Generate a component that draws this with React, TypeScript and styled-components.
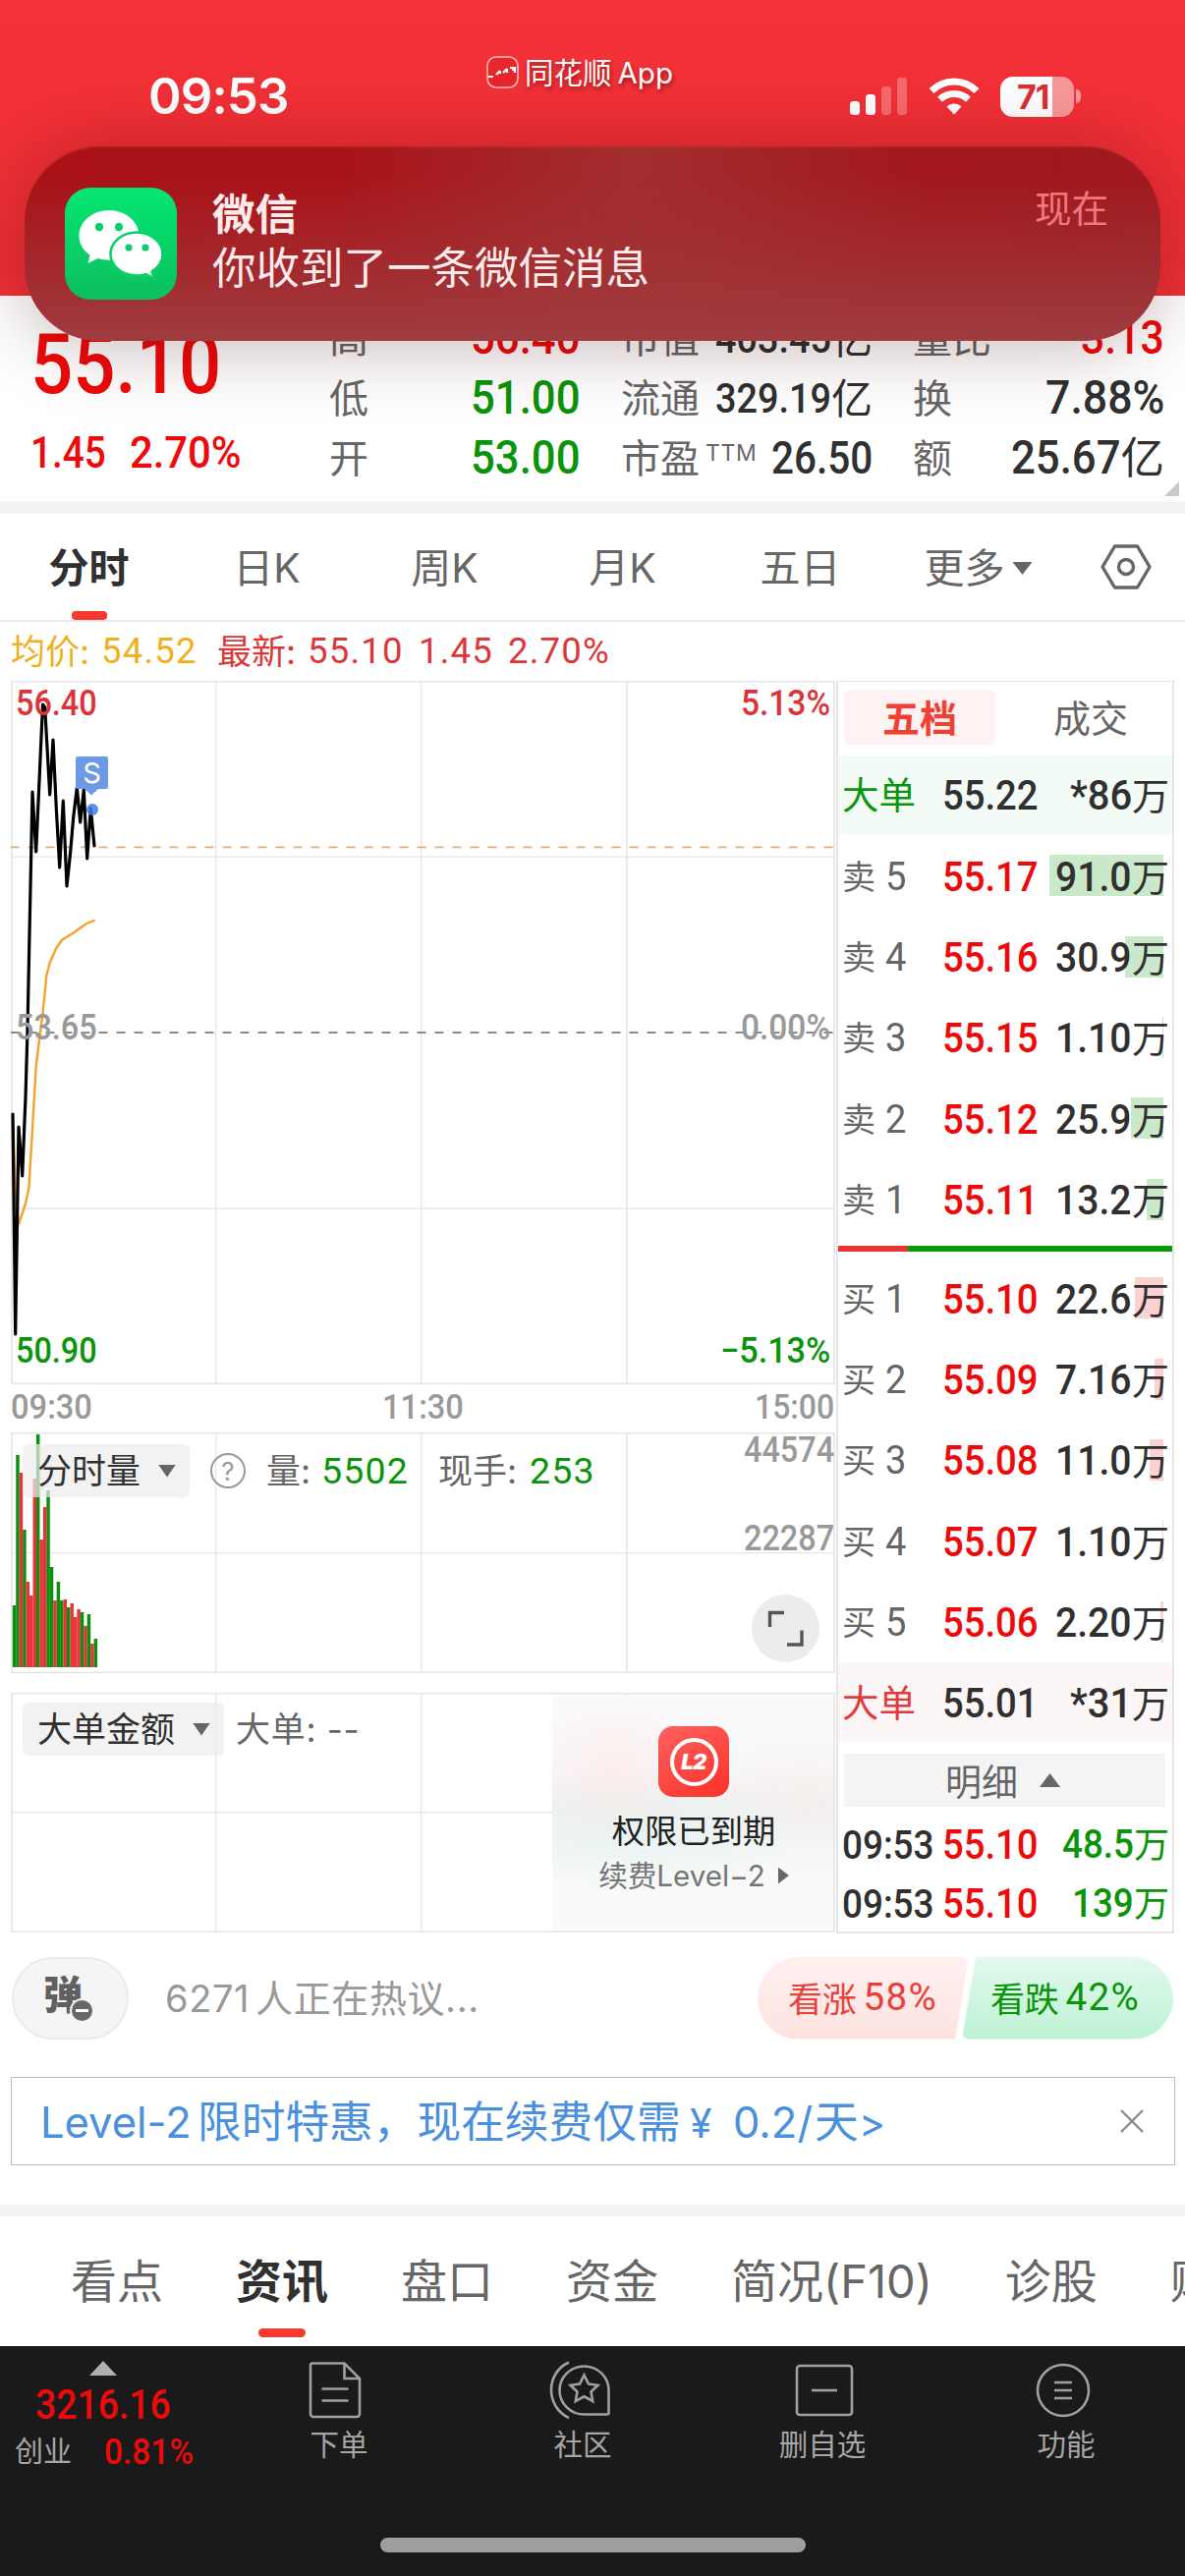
import React from "react";
import styled, { createGlobalStyle, css } from "styled-components";

const RED = "#ee0a0a";
const GREEN = "#0a940a";
const INK = "#303030";
const GRAY = "#666666";
const MUTED = "#999999";
const LINE = "#e6e6e6";

const GlobalStyle = createGlobalStyle`
  * { box-sizing: border-box; }
  html, body { margin: 0; padding: 0; background: #fff; }
  body { font-family: Inter, "Noto Sans CJK SC", sans-serif; color: ${INK}; }
`;

const Page = styled.div`
  position: relative;
  display: flex;
  flex-direction: column;
  width: 1206px;
  height: 2622px;
  overflow: hidden;
  background: #fff;
  white-space: nowrap;
`;

/* ---------- condensed numerals ---------- */

const SQUEEZE = 0.9;
const GLYPH_EM: Record<string, number> = { ".": 0.275, ":": 0.255, "%": 0.737, "−": 0.56, "*": 0.44, " ": 0.25 };
const emWidth = (s: string) => [...s].reduce((w, c) => w + (GLYPH_EM[c] ?? 0.5645), 0);

const Figure = styled.span<{ $size: number; $em: number; $color?: string; $weight?: number; $squeeze: number }>`
  display: inline-block;
  flex: none;
  font-family: Roboto, "Noto Sans CJK SC", sans-serif;
  font-size: ${(p) => p.$size}px;
  font-weight: ${(p) => p.$weight ?? 500};
  color: ${(p) => p.$color ?? "inherit"};
  transform: scaleX(${(p) => p.$squeeze});
  transform-origin: left center;
  margin-right: ${(p) => -(1 - p.$squeeze) * p.$em}em;
`;

type NumProps = { v: string; size: number; color?: string; weight?: number; squeeze?: number };
const Num = ({ v, size, color, weight, squeeze = SQUEEZE }: NumProps) => (
  <Figure $size={size} $em={emWidth(v)} $color={color} $weight={weight} $squeeze={squeeze}>
    {v}
  </Figure>
);

const Label = styled.span<{ $size: number; $color?: string; $bold?: boolean }>`
  flex: none;
  font-family: Inter, "Noto Sans CJK SC", sans-serif;
  font-size: ${(p) => p.$size}px;
  color: ${(p) => p.$color ?? GRAY};
  font-weight: ${(p) => (p.$bold ? 700 : 400)};
`;

/* ---------- status bar ---------- */

const Header = styled.header`
  flex: none;
  height: 301px;
  background: linear-gradient(#f43138 0%, #f23037 40%, #ef3037 100%);
`;

const StatusBar = styled.div`
  display: flex;
  height: 140px;
  color: #fff;
`;

const Clock = styled.div`
  width: 342px;
  padding: 67px 0 0 151px;
  font-size: 51px;
  line-height: 62px;
  font-weight: 600;
  letter-spacing: -0.9px;
`;

const AppMark = styled.div`
  display: flex;
  align-items: center;
  width: 523px;
  height: 36px;
  margin-top: 55px;
  padding-left: 153px;
  font-size: 29.5px;
  line-height: 32px;
  text-shadow: 1px 3px 4px rgba(90, 0, 0, 0.55);
`;

const AppName = styled.span`
  display: flex;
  align-items: baseline;
  gap: 6px;
  margin: 2px 0 0 6px;
`;

const Indicators = styled.div`
  display: flex;
  align-items: center;
  height: 44px;
  margin-top: 76px;
`;

const Bars = styled.svg`
  width: 59px;
  height: 38px;
  margin-right: 21px;
`;

const Wifi = styled.svg`
  width: 52px;
  height: 38px;
  margin-right: 21px;
`;

const Battery = styled.div`
  width: 75px;
  height: 41px;
  border-radius: 13px;
  background: linear-gradient(90deg, #fff 0 53px, rgba(255, 255, 255, 0.5) 53px);
  color: #d93036;
  font-size: 34px;
  font-weight: 700;
  line-height: 41px;
  padding-left: 17px;
  letter-spacing: -1px;
`;

const BatteryTip = styled.div`
  width: 5px;
  height: 14px;
  margin-left: 2px;
  border-radius: 0 5px 5px 0;
  background: rgba(255, 255, 255, 0.5);
`;

/* ---------- notification ---------- */

const Notification = styled.div`
  position: absolute;
  z-index: 5;
  left: 25px;
  top: 149px;
  width: 1156px;
  height: 198px;
  display: flex;
  padding: 0 53px 0 41px;
  border-radius: 76px;
  background:
    radial-gradient(ellipse 300px 260px at 54% 10%, rgba(160, 62, 62, 0.6), rgba(160, 62, 62, 0) 100%),
    linear-gradient(180deg, rgba(158, 62, 66, 0) 15%, rgba(158, 62, 66, 0.95) 100%),
    linear-gradient(90deg, #a91117 0%, #a81419 35%, #9f191e 100%);
  box-shadow: 0 4px 80px rgba(60, 0, 0, 0.3), inset 0 2px 1px rgba(200, 60, 60, 0.25);
`;

const WeChatTile = styled.svg`
  flex: none;
  width: 114px;
  height: 114px;
  margin-top: 42px;
`;

const NoticeBody = styled.div`
  flex: 1;
  margin: 42px 0 0 36px;
  color: #fdeaea;
`;

const NoticeTitle = styled.div`
  font-size: 43.5px;
  line-height: 55px;
  font-weight: 700;
`;

const NoticeText = styled.div`
  font-size: 44.5px;
  line-height: 54px;
`;

const NoticeTime = styled.div`
  margin-top: 41px;
  font-size: 37.5px;
  line-height: 46px;
  color: #f3777c;
`;

/* ---------- quote block ---------- */

const Quote = styled.section`
  position: relative;
  flex: none;
  height: 210px;
  padding: 13px 21px 0 31px;
  display: grid;
  grid-template-columns: 263px 256px 256px 256px;
  column-gap: 41px;
  background: #fff;
  border-bottom: 6px solid #fcfcfc;
`;

const QuoteMain = styled.div`
  display: flex;
  flex-direction: column;
`;

const BigPrice = styled.div`
  margin-top: 20px;
  height: 74px;
  line-height: 74px;
  color: ${RED};
`;

const Change = styled.div`
  display: flex;
  gap: 24px;
  margin-top: 28px;
  line-height: 52px;
  color: ${RED};
`;

const Stats = styled.div`
  display: flex;
  flex-direction: column;
`;

const Stat = styled.div`
  display: flex;
  justify-content: space-between;
  height: 61px;
  line-height: 61px;
`;

const StatValue = styled.span<{ $color?: string }>`
  display: flex;
  color: ${(p) => p.$color ?? INK};
`;

const Ttm = styled.sup`
  align-self: flex-start;
  margin: 0 auto 0 6px;
  font-size: 23px;
  line-height: 50px;
  color: ${GRAY};
  letter-spacing: 0.6px;
`;

const Corner = styled.div`
  position: absolute;
  right: 6px;
  bottom: 0;
  border-left: 15px solid transparent;
  border-bottom: 15px solid #c9c9c9;
`;

const Band = styled.div<{ $mt?: number }>`
  flex: none;
  height: 12px;
  margin-top: ${(p) => p.$mt ?? 0}px;
  background: #f3f3f3;
`;

/* ---------- period tabs ---------- */

const PeriodTabs = styled.nav`
  flex: none;
  display: flex;
  height: 110px;
  border-bottom: 2px solid #ebebeb;
`;

const Period = styled.div<{ $on?: boolean }>`
  display: flex;
  align-items: center;
  justify-content: center;
  flex-wrap: wrap;
  width: 181px;
  height: 108px;
  padding-top: 3px;
  font-size: 41px;
  line-height: 105px;
  color: ${(p) => (p.$on ? INK : GRAY)};
  ${(p) =>
    p.$on &&
    css`
      font-weight: 700;
      &::after {
        content: "";
        width: 36px;
        height: 9px;
        margin: -9px 60px 0;
        border-radius: 4px;
        background: #f8392f;
      }
    `}
`;

const Settings = styled.div`
  flex: 1;
  display: flex;
  align-items: center;
  justify-content: center;
`;

const Caret = styled.i<{ $w: number; $h: number; $up?: boolean; $color?: string; $gap?: number }>`
  flex: none;
  display: inline-block;
  width: ${(p) => p.$w}px;
  height: ${(p) => p.$h}px;
  margin-left: ${(p) => p.$gap ?? 0}px;
  background: ${(p) => p.$color ?? GRAY};
  clip-path: ${(p) => (p.$up ? "polygon(50% 0, 100% 100%, 0 100%)" : "polygon(0 0, 100% 0, 50% 100%)")};
`;

const PriceLine = styled.div`
  flex: none;
  display: flex;
  align-items: center;
  height: 60px;
  line-height: 60px;
  padding-left: 11px;
`;

const Reading = styled.span<{ $w: number; $color: string }>`
  width: ${(p) => p.$w}px;
  font-family: Inter, "Noto Sans CJK SC", sans-serif;
  font-size: 35px;
  color: ${(p) => p.$color};
`;

const ReadingValue = styled.span<{ $w?: number; $color: string; $size?: number }>`
  width: ${(p) => (p.$w ? `${p.$w}px` : "auto")};
  font-family: Roboto, sans-serif;
  font-size: ${(p) => p.$size ?? 36.5}px;
  letter-spacing: 1.2px;
  color: ${(p) => p.$color};
`;

/* ---------- charts ---------- */

const Board = styled.main`
  flex: none;
  display: flex;
  height: 1275px;
  padding-left: 11px;
`;

const Charts = styled.div`
  width: 839px;
  display: flex;
  flex-direction: column;
`;

const Pane = styled.div<{ $h: number; $mt?: number }>`
  position: relative;
  flex: none;
  height: ${(p) => p.$h}px;
  margin-top: ${(p) => p.$mt ?? 0}px;
`;

const Plot = styled.svg`
  position: absolute;
  inset: 0;
  display: block;
`;

const Scale = styled.div`
  position: relative;
  height: 100%;
  display: flex;
  flex-direction: column;
  justify-content: space-between;
  padding: 3px 5px 14px 5px;
`;

const ScaleRow = styled.div<{ $color: string }>`
  display: flex;
  justify-content: space-between;
  height: 40px;
  line-height: 40px;
  color: ${(p) => p.$color};
`;

const TimeAxis = styled.div`
  flex: none;
  display: flex;
  justify-content: space-between;
  height: 49px;
  line-height: 46px;
  padding: 0 1px 0 0;
  color: ${MUTED};
`;

const PaneHead = styled.div<{ $top?: number }>`
  position: relative;
  display: flex;
  align-items: center;
  padding-left: 12px;
  height: 54px;
  top: ${(p) => p.$top ?? 12}px;
  ${Reading} {
    padding-bottom: 5px;
  }
`;

const Chip = styled.div<{ $w: number }>`
  display: flex;
  align-items: center;
  width: ${(p) => p.$w}px;
  height: 54px;
  padding-left: 15px;
  border-radius: 6px;
  background: rgba(236, 236, 236, 0.7);
`;

const ChipText = styled.span`
  font-size: 35px;
  padding-bottom: 5px;
  color: ${INK};
`;

const BigOrder = styled.span`
  padding: 0 0 5px 12px;
  font-size: 35px;
  letter-spacing: 0.7px;
  color: ${GRAY};
`;

const HelpMark = styled.span`
  display: flex;
  align-items: center;
  justify-content: center;
  width: 36px;
  height: 36px;
  margin: 0 21px 0 21px;
  border: 2.5px solid ${MUTED};
  border-radius: 50%;
  font-size: 26px;
  color: ${MUTED};
`;

const VolumeScale = styled.div`
  position: absolute;
  top: -2px;
  right: 1px;
  display: flex;
  flex-direction: column;
  gap: 50px;
  line-height: 40px;
  color: ${MUTED};
`;

const ExpandButton = styled.div`
  position: absolute;
  right: 16px;
  bottom: 11px;
  width: 69px;
  height: 69px;
  border-radius: 50%;
  background: #ececec;
`;

const Promo = styled.div`
  position: absolute;
  top: 3px;
  right: 2px;
  width: 286px;
  height: 239px;
  display: flex;
  flex-direction: column;
  align-items: center;
  padding: 31px 0 0 2px;
  background:
    radial-gradient(ellipse 90px 80px at 22% 32%, rgba(255, 225, 225, 0.45), rgba(255, 225, 225, 0)),
    radial-gradient(ellipse 110px 50px at 90% 40%, rgba(250, 232, 230, 0.4), rgba(250, 232, 230, 0)),
    radial-gradient(ellipse 170px 60px at 30% 58%, rgba(228, 244, 240, 0.8), rgba(228, 244, 240, 0)),
    linear-gradient(#fafafa 0%, #f8f8f8 30%, #f0f0f0 48%, #f6f7f7 68%, #fafafa 85%);
`;

const LevelTile = styled.div`
  display: flex;
  align-items: center;
  justify-content: center;
  width: 72px;
  height: 72px;
  border-radius: 15px;
  background: linear-gradient(150deg, #ff6060, #fb3229);
`;

const LevelRing = styled.div`
  display: flex;
  align-items: center;
  justify-content: center;
  width: 49px;
  height: 49px;
  border: 4px solid #fff;
  border-radius: 50%;
  color: #fff;
  font: italic 900 22px/1 Inter, sans-serif;
  letter-spacing: -0.5px;
`;

const PromoTitle = styled.div`
  margin-top: 12px;
  font-size: 33.3px;
  line-height: 46px;
  color: #222;
`;

const PromoLink = styled.div`
  display: flex;
  align-items: center;
  font-size: 29.6px;
  line-height: 44px;
  color: #757575;
`;

const RightArrow = styled.i`
  width: 11px;
  height: 17px;
  margin-left: 13px;
  background: ${GRAY};
  clip-path: polygon(0 0, 100% 50%, 0 100%);
`;

/* ---------- order book ---------- */

const Book = styled.aside`
  width: 344px;
  margin-left: 1px;
  display: flex;
  flex-direction: column;
  border: 2px solid ${LINE};
  border-top-width: 1px;
`;

const BookTabs = styled.div`
  display: flex;
  height: 75px;
  padding: 8px 6px;
`;

const BookTab = styled.div<{ $on?: boolean }>`
  flex: none;
  display: flex;
  align-items: center;
  justify-content: center;
  width: 154px;
  height: 57px;
  padding-bottom: 5px;
  margin-right: 20px;
  border-radius: 6px;
  font-size: 38px;
  color: ${(p) => (p.$on ? "#f23f34" : GRAY)};
  font-weight: ${(p) => (p.$on ? 700 : 400)};
  background: ${(p) => (p.$on ? "#fff2f2" : "transparent")};
`;

const BookRow = styled.div<{ $h: number; $bg?: string; $drop?: number }>`
  display: grid;
  grid-template-columns: 102px 96px 1fr;
  align-items: center;
  height: ${(p) => p.$h}px;
  line-height: 60px;
  padding: ${(p) => p.$drop ?? 0}px 3px 0 4px;
  background: ${(p) => p.$bg ?? "transparent"};
`;

const Level = styled.span`
  display: flex;
  align-items: center;
  gap: 10px;
`;

const Amount = styled.span<{ $depth?: number; $tint?: string; $color?: string }>`
  display: flex;
  justify-content: flex-end;
  align-items: center;
  height: 48px;
  line-height: 48px;
  color: ${(p) => p.$color ?? INK};
  background: ${(p) =>
    p.$depth ? `linear-gradient(${p.$tint}, ${p.$tint}) right 6.5px top 1.5px / ${p.$depth}px 42px no-repeat` : "none"};
`;

const Ratio = styled.div`
  height: 6px;
  margin: 6px 0 6px;
  background: linear-gradient(90deg, #e93436 0 71px, #0a9a0a 71px);
`;

const DetailBar = styled.div`
  display: flex;
  align-items: center;
  justify-content: center;
  height: 54px;
  margin: 12px 7px 7px 6px;
  padding-right: 4px;
  background: #f4f4f4;
`;

/* ---------- discussion ---------- */

const Talk = styled.section`
  flex: none;
  display: flex;
  align-items: center;
  height: 131px;
  padding: 0 12px;
`;

const DanmuButton = styled.div`
  position: relative;
  width: 119px;
  height: 84px;
  padding-left: 30px;
  border: 2px solid #ebebeb;
  border-radius: 42px;
  background: #f5f5f5;
  font-size: 40px;
  line-height: 73px;
  font-weight: 900;
  color: #606060;
`;

const DanmuOff = styled.i`
  position: absolute;
  left: 57px;
  top: 40px;
  display: flex;
  align-items: center;
  justify-content: center;
  width: 25px;
  height: 25px;
  border: 2px solid #f5f5f5;
  border-radius: 50%;
  background: #686868;
  &::after {
    content: "";
    width: 13px;
    height: 3px;
    background: #fff;
  }
`;

const TalkHint = styled.div`
  flex: 1;
  padding: 0 0 5px 37px;
  font-size: 38px;
  letter-spacing: 0.6px;
  color: ${MUTED};
`;

const HintCount = styled.span`
  margin-right: 6px;
`;

const Vote = styled.div<{ $bull?: boolean }>`
  display: flex;
  align-items: center;
  gap: 7px;
  height: 84px;
  width: 215px;
  padding: 0 0 3px ${(p) => (p.$bull ? 31 : 29)}px;
  font-size: 35px;
  letter-spacing: -0.2px;
  color: ${(p) => (p.$bull ? "#e8403a" : GREEN)};
  background: ${(p) => (p.$bull ? "linear-gradient(#fff1f0, #fde2df)" : "linear-gradient(#e3f9ee, #bdf2d3)")};
  border-radius: ${(p) => (p.$bull ? "42px 8px 8px 42px" : "8px 42px 42px 8px")};
  clip-path: ${(p) =>
    p.$bull ? "polygon(0 0, 100% 0, 201px 100%, 0 100%)" : "polygon(14px 0, 100% 0, 100% 100%, 0 100%)"};
  & + & {
    margin-left: -7px;
  }
`;

const VoteValue = styled.span`
  font-family: Roboto, sans-serif;
  font-size: 38.5px;
  letter-spacing: 1.3px;
  padding-top: 1px;
`;

const Banner = styled.section`
  flex: none;
  display: flex;
  align-items: center;
  height: 90px;
  margin: 15px 10px 0 11px;
  padding: 0 31px 0 29px;
  border: 1px solid #b9bcc0;
  color: #4a90dc;
`;

const BannerText = styled.div`
  flex: 1;
  display: flex;
  align-items: baseline;
  margin-top: -5px;
`;

const Piece = styled.span<{ $w?: number; $size?: number; $ls?: number }>`
  width: ${(p) => (p.$w ? `${p.$w}px` : "auto")};
  font-size: ${(p) => p.$size ?? 44.7}px;
  letter-spacing: ${(p) => p.$ls ?? 0}px;
`;

/* ---------- section tabs and bottom bar ---------- */

const SectionTabs = styled.nav`
  flex: none;
  display: flex;
  gap: 74px;
  height: 132px;
  padding-left: 72px;
  overflow: hidden;
`;

const SectionTab = styled.div<{ $on?: boolean }>`
  flex: none;
  display: flex;
  flex-direction: column;
  align-items: center;
  font-size: 47px;
  line-height: 114px;
  padding-top: 9px;
  height: 132px;
  color: ${(p) => (p.$on ? INK : GRAY)};
  ${(p) =>
    p.$on &&
    css`
      font-weight: 700;
      &::after {
        content: "";
        flex: none;
        width: 48px;
        height: 9px;
        margin-top: -9px;
        border-radius: 5px;
        background: #f8392f;
      }
    `}
`;

const BottomBar = styled.footer`
  position: relative;
  flex: none;
  height: 234px;
  display: flex;
  background: #1a1a1a;
`;

const IndexCell = styled.div`
  flex: none;
  width: 221px;
  padding-top: 15px;
`;

const IndexCaret = styled.div`
  display: flex;
  padding-left: 91px;
`;

const IndexValue = styled.div`
  padding-left: 36px;
  line-height: 50px;
  margin-top: 5px;
  color: ${RED};
`;

const IndexChange = styled.div`
  display: flex;
  justify-content: space-between;
  margin-top: -7px;
  padding: 0 24px 0 15px;
  line-height: 44px;
`;

const NavItem = styled.div<{ $w: number }>`
  flex: none;
  display: flex;
  flex-direction: column;
  align-items: center;
  width: ${(p) => p.$w}px;
  padding-top: 13px;
  color: #a6a6a6;
  font-size: 29.5px;
  line-height: 44px;
`;

const NavIcon = styled.svg<{ $pull: number }>`
  width: 64px;
  height: 62px;
  margin: 0 ${(p) => p.$pull}px 3px 0;
  fill: none;
  stroke: #a0a0a0;
  stroke-width: 2.6;
`;

const HomeBar = styled.div`
  position: absolute;
  left: 387px;
  top: 195px;
  width: 433px;
  height: 15px;
  border-radius: 8px;
  background: #9e9e9e;
`;

/* ---------- data ---------- */

const PRICE =
  "13,1134 15.7,1358 19,1147 22.7,1197 26,1117 28,1048 33,806 36.7,867 43.5,717 45.7,720 50.7,809 54,753 57.3,823 60.7,883 64.3,815 68,902 71.5,869 74.7,832 78.3,802 81.7,837 85.3,804 88.7,874 92.3,823 96,861";
const AVERAGE =
  "13.5,1145 16,1220 19,1246 26,1225 29.5,1208 32.7,1154 36.7,1085 40.7,1053 43.7,1030 47.3,993 50.7,980 57.3,965 63.3,956.5 74,950 81,945 88,940 96.7,936.6";

const VOLUME: [string, number][] = [
  ["g", 63], ["g", 216], ["r", 198], ["g", 140], ["r", 87], ["r", 73], ["r", 192], ["g", 237], ["r", 130],
  ["r", 163], ["g", 180], ["g", 102], ["r", 68], ["g", 87], ["g", 68], ["r", 69], ["g", 61], ["r", 65],
  ["r", 51], ["r", 59], ["g", 56], ["r", 42], ["g", 54], ["r", 24], ["g", 29],
];

const SELL: [string, string, string, number][] = [
  ["5", "55.17", "91.0", 116],
  ["4", "55.16", "30.9", 39],
  ["3", "55.15", "1.10", 1],
  ["2", "55.12", "25.9", 33],
  ["1", "55.11", "13.2", 17],
];
const BUY: [string, string, string, number][] = [
  ["1", "55.10", "22.6", 29],
  ["2", "55.09", "7.16", 9],
  ["3", "55.08", "11.0", 14],
  ["4", "55.07", "1.10", 1],
  ["5", "55.06", "2.20", 3],
];

const GridLines = ({ top, bottom, rows }: { top: number; bottom: number; rows: number[] }) => (
  <g fill={LINE}>
    <rect x="11" y={top} width="839" height="1.5" />
    <rect x="11" y={bottom - 1.5} width="839" height="1.5" />
    {rows.map((y) => (
      <rect key={y} x="11" y={y} width="839" height="1.3" />
    ))}
    <rect x="11" y={top} width="1.7" height={bottom - top} />
    <rect x="219" y={top} width="1.3" height={bottom - top} />
    <rect x="428" y={top} width="1.3" height={bottom - top} />
    <rect x="637" y={top} width="1.7" height={bottom - top} />
    <rect x="848.3" y={top} width="1.7" height={bottom - top} />
  </g>
);

const Depth = ({ side, tint, rows }: { side: string; tint: string; rows: typeof SELL }) => (
  <>
    {rows.map(([n, price, vol, depth]) => (
      <BookRow key={n} $h={82.4} $drop={3}>
        <Level>
          <Label $size={34}>{side}</Label>
          <Num v={n} size={40} weight={400} color={GRAY} squeeze={0.95} />
        </Level>
        <Num v={price} size={42.5} color={RED} />
        <Amount $depth={depth} $tint={tint}>
          <Num v={vol} size={42.5} squeeze={0.92} />
          <Label $size={38} $color={INK}>万</Label>
        </Amount>
      </BookRow>
    ))}
  </>
);

export default function App() {
  return (
    <Page>
      <GlobalStyle />
      <Header>
        <StatusBar>
          <Clock>09:53</Clock>
          <AppMark>
            <svg width="33" height="33" viewBox="0 0 33 33">
              <rect x="1" y="1" width="31" height="31" rx="9" fill="#e8262c" stroke="#fbb" strokeWidth="1.6" />
              <path d="M2 21h5M10 19l4-4M14 15v3M17 17l4-4M21 13v4M24 12h5v5M26 14h3" stroke="#fff" strokeWidth="2.2" fill="none" />
            </svg>
            <AppName>同花顺<span>App</span></AppName>
          </AppMark>
          <Indicators>
            <Bars viewBox="0 0 59 38" fill="#fff">
              <rect x="0" y="24" width="10" height="14" rx="3.5" />
              <rect x="16" y="17" width="10" height="21" rx="3.5" />
              <rect x="32" y="9" width="10" height="29" rx="3.5" opacity="0.28" />
              <rect x="48" y="0" width="10" height="38" rx="3.5" opacity="0.28" />
            </Bars>
            <Wifi viewBox="0 0 52 38" fill="none" stroke="#fff" strokeWidth="7">
              <path d="M3 13.5C16 .8 36 .8 49 13.5" />
              <path d="M11.500 22.200c8-7.600 21-7.600 29 0" />
              <path d="M26 37.500l-7.500-8c4.500-4 10.500-4 15 0z" fill="#fff" stroke="none" />
            </Wifi>
            <Battery>71</Battery>
            <BatteryTip />
          </Indicators>
        </StatusBar>
      </Header>

      <Notification>
        <WeChatTile viewBox="0 0 114 114">
          <defs>
            <linearGradient id="wx" x1="0" y1="0" x2="0" y2="1">
              <stop offset="0" stopColor="#04e672" />
              <stop offset="1" stopColor="#0cbf5e" />
            </linearGradient>
          </defs>
          <rect width="114" height="114" rx="26" fill="url(#wx)" />
          <path d="M45 23C28 23 14.500 34.500 14.500 49c0 8 4.200 15 11 19.800L23.500 77l9.800-5c3.700 1.100 7.600 1.700 11.700 1.700 17 0 30.500-10.700 30.500-24.700S62 23 45 23z" fill="#fff" />
          <path d="M73 45.500c-14.600 0-26.500 9.800-26.500 22S58.400 89.500 73 89.500c3.200 0 6.300-.5 9.200-1.300l8.500 4.300-2-7.300c6.700-4.100 10.800-10.500 10.800-17.700 0-12.200-11.900-22-26.500-22z" fill="#fff" stroke="#08d368" strokeWidth="2.600" />
          <g fill="#08d067">
            <circle cx="35" cy="40" r="4.200" />
            <circle cx="55" cy="40" r="4.200" />
            <circle cx="65" cy="61" r="3.600" />
            <circle cx="82" cy="61" r="3.600" />
          </g>
        </WeChatTile>
        <NoticeBody>
          <NoticeTitle>微信</NoticeTitle>
          <NoticeText>你收到了一条微信消息</NoticeText>
        </NoticeBody>
        <NoticeTime>现在</NoticeTime>
      </Notification>

      <Quote>
        <QuoteMain>
          <BigPrice>
            <Num v="55.10" size={86} squeeze={0.885} />
          </BigPrice>
          <Change>
            <Num v="1.45" size={43.5} squeeze={0.89} />
            <Num v="2.70%" size={43.5} squeeze={0.96} />
          </Change>
        </QuoteMain>
        <Stats>
          <Stat>
            <Label $size={40}>高</Label>
            <StatValue $color={RED}><Num v="56.40" size={47.5} squeeze={0.92} /></StatValue>
          </Stat>
          <Stat>
            <Label $size={40}>低</Label>
            <StatValue $color={GREEN}><Num v="51.00" size={47.5} squeeze={0.92} /></StatValue>
          </Stat>
          <Stat>
            <Label $size={40}>开</Label>
            <StatValue $color={GREEN}><Num v="53.00" size={47.5} squeeze={0.92} /></StatValue>
          </Stat>
        </Stats>
        <Stats>
          <Stat>
            <Label $size={40}>市值</Label>
            <StatValue><Num v="403.45" size={43} squeeze={0.88} /><Label $size={42} $color={INK}>亿</Label></StatValue>
          </Stat>
          <Stat>
            <Label $size={40}>流通</Label>
            <StatValue><Num v="329.19" size={43} squeeze={0.88} /><Label $size={42} $color={INK}>亿</Label></StatValue>
          </Stat>
          <Stat>
            <Label $size={40}>市盈</Label>
            <Ttm>TTM</Ttm>
            <StatValue><Num v="26.50" size={45.5} squeeze={0.89} /></StatValue>
          </Stat>
        </Stats>
        <Stats>
          <Stat>
            <Label $size={40}>量比</Label>
            <StatValue $color={RED}><Num v="3.13" size={47.5} squeeze={0.9} /></StatValue>
          </Stat>
          <Stat>
            <Label $size={40}>换</Label>
            <StatValue><Num v="7.88%" size={47.5} squeeze={0.94} /></StatValue>
          </Stat>
          <Stat>
            <Label $size={40}>额</Label>
            <StatValue><Num v="25.67" size={47.5} squeeze={0.92} /><Label $size={44.5} $color={INK}>亿</Label></StatValue>
          </Stat>
        </Stats>
        <Corner />
      </Quote>
      <Band />

      <PeriodTabs>
        <Period $on>分时</Period>
        <Period>日K</Period>
        <Period>周K</Period>
        <Period>月K</Period>
        <Period>五日</Period>
        <Period>更多<Caret $w={20} $h={13} $gap={8} /></Period>
        <Settings>
          <svg width="52" height="46" viewBox="0 0 52 46" fill="none" stroke={GRAY} strokeWidth="3.4" strokeLinejoin="round">
            <path d="M14.500 2h23L50 23 37.500 44h-23L2 23z" />
            <circle cx="26" cy="23" r="7.500" />
          </svg>
        </Settings>
      </PeriodTabs>

      <PriceLine>
        <Reading $w={92} $color="#efb01c">均价:</Reading>
        <ReadingValue $w={118} $color="#efb01c">54.52</ReadingValue>
        <Reading $w={92} $color="#dc363a">最新:</Reading>
        <ReadingValue $w={113} $color="#dc363a">55.10</ReadingValue>
        <ReadingValue $w={91} $color="#dc363a">1.45</ReadingValue>
        <ReadingValue $color="#dc363a">2.70%</ReadingValue>
      </PriceLine>

      <Board>
        <Charts>
          <Pane $h={716}>
            <Plot width="839" height="716" viewBox="11 693 839 716">
              <GridLines top={693} bottom={1409} rows={[871.5, 1229.5]} />
              <path d="M10.500 862.300H848" stroke="#dcae82" strokeWidth="1.800" strokeDasharray="9 9" />
              <path d="M10.500 1051H848" stroke="#666" strokeWidth="1.600" strokeDasharray="9 9" />
              <polyline points={AVERAGE} fill="none" stroke="#f6a12d" strokeWidth="2.400" strokeLinejoin="round" />
              <polyline points={PRICE} fill="none" stroke="#000" strokeWidth="3.200" strokeLinejoin="round" strokeLinecap="round" />
              <ellipse cx="94" cy="824" rx="6" ry="6" fill="#3f7fe0" opacity="0.85" />
              <path d="M79 770h29q2 0 2 2v29q0 2-2 2h-8l-7 6.500-7-6.500h-7q-2 0-2-2v-29q0-2 2-2z" fill="#6c9ae4" />
              <text x="93.500" y="797" fontSize="29" textAnchor="middle" fill="#fff" fontFamily="Inter, sans-serif">S</text>
            </Plot>
            <Scale>
              <ScaleRow $color="#dc3338"><Num v="56.40" size={36} /><Num v="5.13%" size={36} squeeze={0.93} /></ScaleRow>
              <ScaleRow $color={MUTED}><Num v="53.65" size={36} /><Num v="0.00%" size={36} squeeze={0.93} /></ScaleRow>
              <ScaleRow $color={GREEN}><Num v="50.90" size={36} /><Num v="−5.13%" size={36} squeeze={0.95} /></ScaleRow>
            </Scale>
          </Pane>
          <TimeAxis>
            <Num v="09:30" size={35.5} squeeze={0.92} />
            <Num v="11:30" size={35.5} squeeze={0.92} />
            <Num v="15:00" size={35.5} />
          </TimeAxis>
          <Pane $h={245}>
            <Plot width="839" height="245" viewBox="11 1458 839 245">
              <GridLines top={1458} bottom={1703} rows={[1580]} />
              {VOLUME.map(([c, h], i) => (
                <rect key={i} x={12.8 + i * 3.45} y={1697 - h} width="3.500" height={h} fill={c === "g" ? "#0f8f0f" : "#e9333a"} />
              ))}
            </Plot>
            <PaneHead>
              <Chip $w={170}><ChipText>分时量</ChipText><Caret $w={18} $h={13} $gap={18} /></Chip>
              <HelpMark>?</HelpMark>
              <Reading $w={56} $color={GRAY}>量:</Reading>
              <ReadingValue $w={119} $color={GREEN} $size={37.5}>5502</ReadingValue>
              <Reading $w={93} $color={GRAY}>现手:</Reading>
              <ReadingValue $color={GREEN} $size={37.5}>253</ReadingValue>
            </PaneHead>
            <VolumeScale>
              <Num v="44574" size={36} />
              <Num v="22287" size={36} />
            </VolumeScale>
            <ExpandButton>
              <svg width="69" height="69" viewBox="0 0 69 69" fill="none" stroke="#555" strokeWidth="3.400">
                <path d="M18.500 33V18.500H33M51 36.500V51H36" />
              </svg>
            </ExpandButton>
          </Pane>
          <Pane $h={244} $mt={20}>
            <Plot width="839" height="244" viewBox="11 1723 839 244">
              <GridLines top={1723} bottom={1967} rows={[1844]} />
            </Plot>
            <PaneHead $top={10}>
              <Chip $w={205}><ChipText>大单金额</ChipText><Caret $w={18} $h={13} $gap={18} /></Chip>
              <BigOrder>大单: --</BigOrder>
            </PaneHead>
            <Promo>
              <LevelTile><LevelRing>L2</LevelRing></LevelTile>
              <PromoTitle>权限已到期</PromoTitle>
              <PromoLink>续费Level−2<RightArrow /></PromoLink>
            </Promo>
          </Pane>
        </Charts>

        <Book>
          <BookTabs>
            <BookTab $on>五档</BookTab>
            <BookTab>成交</BookTab>
          </BookTabs>
          <BookRow $h={81} $bg="#f3fbf7">
            <Label $size={37.5} $color={GREEN}>大单</Label>
            <Num v="55.22" size={42.5} />
            <Amount>
              <Num v="*86" size={42.5} squeeze={0.94} />
              <Label $size={38} $color={INK}>万</Label>
            </Amount>
          </BookRow>
          <Depth side="卖" tint="#cae9ca" rows={SELL} />
          <Ratio />
          <Depth side="买" tint="#fad2d2" rows={BUY} />
          <BookRow $h={81} $bg="#fdf6f6" $drop={3}>
            <Label $size={37.5} $color="#e23a3c">大单</Label>
            <Num v="55.01" size={42.5} />
            <Amount>
              <Num v="*31" size={42.5} squeeze={0.94} />
              <Label $size={38} $color={INK}>万</Label>
            </Amount>
          </BookRow>
          <DetailBar>
            <Label $size={37}>明细</Label>
            <Caret $w={21} $h={14} $gap={22} $up />
          </DetailBar>
          {["48.5", "139"].map((v) => (
            <BookRow key={v} $h={60} $drop={2}>
              <Num v="09:53" size={40.5} squeeze={0.91} />
              <Num v="55.10" size={42} color={RED} squeeze={0.91} />
              <Amount $color={GREEN}>
                <Num v={v} size={40} squeeze={0.92} />
                <Label $size={36} $color={GREEN}>万</Label>
              </Amount>
            </BookRow>
          ))}
        </Book>
      </Board>

      <Talk>
        <DanmuButton>弹<DanmuOff /></DanmuButton>
        <TalkHint><HintCount>6271</HintCount>人正在热议...</TalkHint>
        <Vote $bull>看涨<VoteValue>58%</VoteValue></Vote>
        <Vote>看跌<VoteValue>42%</VoteValue></Vote>
      </Talk>

      <Banner>
        <BannerText>
          <Piece $w={160} $size={43.5}>Level-2</Piece>
          <Piece $w={501}>限时特惠，现在续费仅需</Piece>
          <Piece $w={44} $size={41}>¥</Piece>
          <Piece $w={83} $size={43.5}>0.2/</Piece>
          <Piece $w={45}>天</Piece>
          <Piece $size={41}>&gt;</Piece>
        </BannerText>
        <svg width="24" height="24" viewBox="0 0 24 24" stroke="#8a8a8a" strokeWidth="2.400">
          <path d="M1 1l22 22M23 1L1 23" />
        </svg>
      </Banner>

      <Band $mt={40} />

      <SectionTabs>
        <SectionTab>看点</SectionTab>
        <SectionTab $on>资讯</SectionTab>
        <SectionTab>盘口</SectionTab>
        <SectionTab>资金</SectionTab>
        <SectionTab>简况(F10)</SectionTab>
        <SectionTab>诊股</SectionTab>
        <SectionTab>财</SectionTab>
      </SectionTabs>

      <BottomBar>
        <IndexCell>
          <IndexCaret><Caret $w={28} $h={15} $up $color="#b0b0b0" /></IndexCaret>
          <IndexValue><Num v="3216.16" size={42} squeeze={0.89} /></IndexValue>
          <IndexChange>
            <Label $size={29} $color="#a6a6a6">创业</Label>
            <Num v="0.81%" size={36} color={RED} squeeze={0.93} />
          </IndexChange>
        </IndexCell>
        <NavItem $w={248}>
          <NavIcon $pull={8} viewBox="0 0 64 62">
            <path d="M9 4.500h32.500L57 20v36a3 3 0 0 1-3 3H10a3 3 0 0 1-3-3V6.500a2 2 0 0 1 2-2z M41.500 4.500V20H57M18.500 30.500h27M18.500 42.500h27" />
          </NavIcon>
          下单
        </NavItem>
        <NavItem $w={248}>
          <NavIcon $pull={6} viewBox="0 0 64 62">
            <path d="M36.500 56.500H60a1.500 1.500 0 0 0 1.500-1.500V32a25 24.500 0 1 0-25 24.500z" />
            <path d="M21 3.500C-3 14-3 49 21 60" />
            <path d="M36.500 16.500l4.500 9 9.500 1.300-7 6.700 1.700 9.500-8.700-4.700-8.700 4.700 1.700-9.500-7-6.700 9.500-1.300z" />
          </NavIcon>
          社区
        </NavItem>
        <NavItem $w={240}>
          <NavIcon $pull={-4} viewBox="0 0 64 62">
            <rect x="4" y="7" width="56" height="50" rx="3" />
            <path d="M19 32h26" />
          </NavIcon>
          删自选
        </NavItem>
        <NavItem $w={256}>
          <NavIcon $pull={6} viewBox="0 0 64 62">
            <circle cx="32" cy="32" r="26" />
            <path d="M23 24h18M23 32h18M23 40h18" />
          </NavIcon>
          功能
        </NavItem>
        <HomeBar />
      </BottomBar>
    </Page>
  );
}
